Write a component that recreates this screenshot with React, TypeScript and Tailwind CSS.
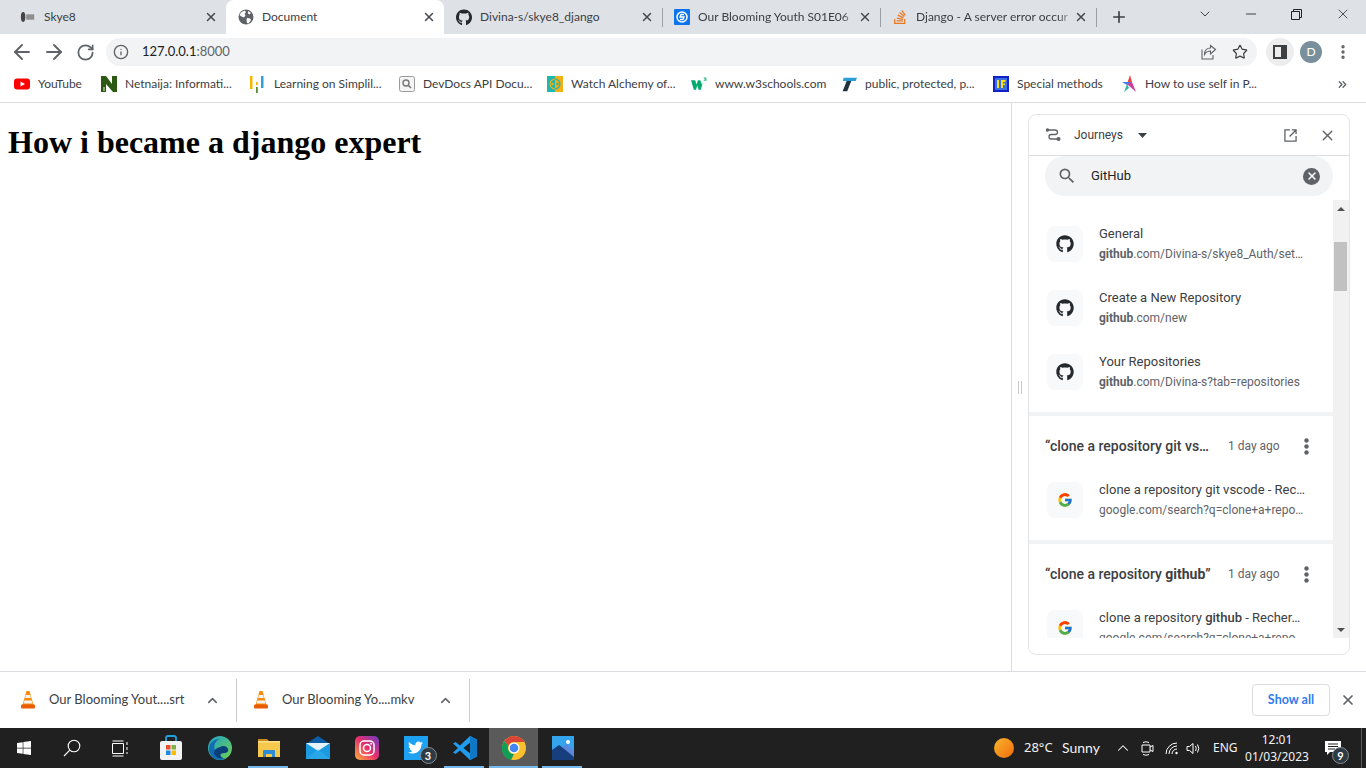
import React from "react";
import { FaGithub, FaStackOverflow, FaWindows, FaTwitter } from "react-icons/fa";
import { FcGoogle } from "react-icons/fc";
import { ArrowLeft, ArrowRight, RotateCw, Info, Star, MoreVertical, Plus, X, ChevronDown, ChevronUp, Minus, ChevronsRight } from "lucide-react";

const ui = "font-['Lato',sans-serif]";

function Favicon({ kind }: { kind: string }) {
  switch (kind) {
    case "yt":
      return <svg width="16" height="16" viewBox="0 0 16 16"><rect y="2.5" width="16" height="11" rx="3" fill="#f00" /><path d="M6.5 5.5v5L11 8z" fill="#fff" /></svg>;
    case "n":
      return <svg width="16" height="18" viewBox="0 0 16 18"><path d="M0 1h5l6 8V1h5v16h-4L5 9v8H0z" fill="#2c5a12" /><path d="M2 12h2v4H2z" fill="#8aa96f" /></svg>;
    case "sl":
      return <svg width="16" height="18" viewBox="0 0 16 18"><rect x="0" y="1" width="2.500" height="13" fill="#f7b500" /><rect x="6" y="7" width="1.800" height="3" fill="#f7b500" /><rect x="6" y="12" width="1.800" height="6" fill="#5a8f3c" /><rect x="11" y="1" width="2.500" height="12" fill="#2f9fe0" /></svg>;
    case "dd":
      return <svg width="16" height="16" viewBox="0 0 16 16"><rect x=".5" y=".5" width="15" height="15" rx="2" fill="#f4f4f4" stroke="#9a9a9a" /><circle cx="7" cy="7" r="3" fill="none" stroke="#777" strokeWidth="1.400" /><path d="M9.200 9.200 12 12" stroke="#777" strokeWidth="1.600" /></svg>;
    case "al":
      return <svg width="16" height="16" viewBox="0 0 16 16"><rect width="8" height="16" fill="#20b6b0" /><rect x="8" width="8" height="16" fill="#f5ae13" /><path d="M8 3C5 3 3 6 3 8s2 5 5 5" fill="none" stroke="#f5ae13" strokeWidth="1.200" /><path d="M8 3c3 0 5 3 5 5s-2 5-5 5" fill="none" stroke="#20b6b0" strokeWidth="1.200" /><circle cx="5.500" cy="8" r="1.200" fill="#f5ae13" /><circle cx="10.500" cy="8" r="1.200" fill="#20b6b0" /></svg>;
    case "w3":
      return <svg width="17" height="14" viewBox="0 0 17 14"><path d="M0 3h4.500l1.200 4.500L7.500 3h2.400l1.600 4.500L13 3h0l-2.500 10H8L6.700 8.500 5.300 13H3z" fill="#04aa6d" /><path d="M13.500 0h3v.8l-1 .9h1V3.500h-3v-1h1.800l-1.800-1.500z" fill="#04aa6d" opacity=".8" /></svg>;
    case "t":
      return <svg width="18" height="17" viewBox="0 0 18 17"><path d="M3 1h15l-1.500 3.500h-5L9 9 5 6.500 7 4.500H2z" fill="#2a9fd6" /><path d="M6.500 4.500h5L7 16H1.800z" fill="#22313f" /></svg>;
    case "if":
      return <svg width="16" height="16" viewBox="0 0 16 16"><rect width="16" height="16" fill="#1220c8" /><rect x="2" y="2" width="12" height="12" fill="#3b6fe0" /><rect x="4" y="4" width="2" height="8" fill="#f7e017" /><path d="M8 4h4.500v2H10v1.500h2V9h-2v3H8z" fill="#f7e017" /></svg>;
    case "st":
      return <svg width="16" height="18" viewBox="0 0 16 18"><path d="M9 0l2 7-5 2z" fill="#e8453c" /><path d="M1 7l10 0-5 3z" fill="#3f7fe8" /><path d="M6 9l5-2 4 10z" fill="#c83fa0" /><path d="M6 9L3 17l5-4z" fill="#34b7a7" /></svg>;
    default:
      return null;
  }
}

function GlobeFill() {
  return (
    <svg width="16" height="16" viewBox="0 0 16 16">
      <circle cx="8" cy="8" r="7.500" fill="#5f6368" />
      <path d="M3 3.500 6.500 1.500 8 3 6.500 5 7.500 6.500 6 8.500 3.500 7.500 1.500 6zM9 9l3 .500 1 1.500-2.500 3.500L9 14l-.500-3zM10 2l3 2-1.500 1.500L10 4.500z" fill="#fff" />
    </svg>
  );
}

const tabs = [
  { w: "w-[218px]", title: "Skye8", icon: <svg width="18" height="12" viewBox="0 0 18 12"><ellipse cx="3.500" cy="6" rx="2.500" ry="5.500" fill="#444" /><rect x="7" y="3" width="9" height="6" fill="#8f8f8f" /></svg>, sep: false, active: false, fade: false },
  { w: "w-[218px]", title: "Document", icon: <GlobeFill />, sep: false, active: true, fade: false },
  { w: "w-[218px]", title: "Divina-s/skye8_django", icon: <FaGithub size={17} color="#24292f" />, sep: true, active: false, fade: false },
  { w: "w-[218px]", title: "Our Blooming Youth S01E06", icon: <svg width="16" height="16" viewBox="0 0 16 16"><rect width="16" height="16" rx="1" fill="#0b74ee" /><circle cx="8" cy="8" r="5" fill="none" stroke="#fff" strokeWidth="1.500" /><path d="M10 5.500H7L6 8h4l-1 2.500H6" fill="none" stroke="#fff" strokeWidth="1.300" /></svg>, sep: true, active: false, fade: true },
  { w: "w-[216px]", title: "Django - A server error occur", icon: <FaStackOverflow size={16} color="#e87922" />, sep: true, active: false, fade: true },
];

const bookmarks = [
  { k: "yt", t: "YouTube", w: "w-[87px]" },
  { k: "n", t: "Netnaija: Informati...", w: "w-[149px]" },
  { k: "sl", t: "Learning on Simplil...", w: "w-[149px]" },
  { k: "dd", t: "DevDocs API Docu...", w: "w-[148px]" },
  { k: "al", t: "Watch Alchemy of...", w: "w-[144px]" },
  { k: "w3", t: "www.w3schools.com", w: "w-[150px]" },
  { k: "t", t: "public, protected, p...", w: "w-[152px]" },
  { k: "if", t: "Special methods", w: "w-[128px]" },
  { k: "st", t: "How to use self in P...", w: "w-[198px]" },
];

function Row({ icon, title, url }: { icon: React.ReactNode; title: React.ReactNode; url: React.ReactNode }) {
  return (
    <div className="flex h-16 shrink-0 items-center pl-[18px]">
      <div className="flex h-9 w-9 shrink-0 items-center justify-center rounded-lg bg-[#f8f9fa]">{icon}</div>
      <div className="ml-4 w-[206px] min-w-0">
        <div className="whitespace-nowrap text-[13px] leading-5 text-[#3c4043]">{title}</div>
        <div className="whitespace-nowrap text-xs leading-5 text-[#5f6368]">{url}</div>
      </div>
    </div>
  );
}

function ClusterHead({ title }: { title: React.ReactNode }) {
  return (
    <div className="flex h-[52px] shrink-0 items-center pt-[8px] pl-4">
      <div className="w-[168px] whitespace-nowrap text-sm font-medium text-[#3c4043]">{title}</div>
      <span className="ml-[15px] w-[52px] whitespace-nowrap text-xs text-[#5f6368]">1 day ago</span>
      <svg width="5" height="17" viewBox="0 0 5 17" className="ml-[23.500px]" fill="#5f6368"><circle cx="2.500" cy="2.500" r="2.200" /><circle cx="2.500" cy="8.500" r="2.200" /><circle cx="2.500" cy="14.500" r="2.200" /></svg>
    </div>
  );
}

function Bag() {
  return (
    <svg width="24" height="26" viewBox="0 0 24 26">
      <path d="M7 6V3q0-2 2-2h6q2 0 2 2v3" fill="none" stroke="#1ba1e2" strokeWidth="1.800" />
      <rect x="1" y="6" width="22" height="19" rx="2" fill="#f3f3f3" />
      <rect x="7" y="10" width="4.500" height="4.500" fill="#e8512f" />
      <rect x="12.500" y="10" width="4.500" height="4.500" fill="#7cb342" />
      <rect x="7" y="15.500" width="4.500" height="4.500" fill="#1e88e5" />
      <rect x="12.500" y="15.500" width="4.500" height="4.500" fill="#fbbc05" />
    </svg>
  );
}

function Edge() {
  return (
    <svg width="24" height="24" viewBox="0 0 24 24">
      <defs>
        <linearGradient id="eg" x1="0" y1="0" x2="1" y2="1"><stop offset="0" stopColor="#1fa0c9" /><stop offset="1" stopColor="#6fd34c" /></linearGradient>
      </defs>
      <circle cx="12" cy="12" r="12" fill="url(#eg)" />
      <path d="M1 13C1 6 7 3 12 3c-6 2-7 8-4 14 2 4 6 6 10 5-2 1-4 2-6 2C6 24 1 19 1 13z" fill="#0f6cb5" />
      <path d="M12 11c3-2 7-1 8 2 1 2-1 4-4 4-4 0-5 3-1 5-5 1-9-2-9-6 0-2 2-4 6-5z" fill="#0b3f7a" />
    </svg>
  );
}

function FolderIcon() {
  return (
    <svg width="22" height="20" viewBox="0 0 22 20">
      <path d="M0 1h9l2 2h-11z" fill="#c98a1b" />
      <rect y="3" width="22" height="16" fill="#f4c84a" />
      <rect y="3" width="22" height="1.500" fill="#fbe08a" />
      <path d="M5 19v-6q0-1 1-1h10q1 0 1 1v6h-3v-3H8v3z" fill="#2d8ad6" />
    </svg>
  );
}

function Mail() {
  return (
    <svg width="24" height="24" viewBox="0 0 24 24">
      <path d="M12 0 24 8H0z" fill="#0a5ea8" />
      <rect y="7" width="24" height="16" fill="#1a9ae0" />
      <path d="M0 7h24L12 15z" fill="#e8f2fa" />
      <path d="M0 23 12 13l12 10z" fill="#38b1ee" opacity=".5" />
    </svg>
  );
}

function Insta() {
  return (
    <svg width="24" height="24" viewBox="0 0 24 24">
      <defs>
        <linearGradient id="ig" x1="0" y1="1" x2="1" y2="0"><stop offset="0" stopColor="#fdb23b" /><stop offset=".5" stopColor="#e8306b" /><stop offset="1" stopColor="#6a3bc4" /></linearGradient>
      </defs>
      <rect width="24" height="24" rx="5" fill="url(#ig)" />
      <rect x="5" y="5" width="14" height="14" rx="4" fill="none" stroke="#fff" strokeWidth="1.500" />
      <circle cx="12" cy="12" r="3.500" fill="none" stroke="#fff" strokeWidth="1.500" />
      <circle cx="16.200" cy="7.800" r="1" fill="#fff" />
    </svg>
  );
}

function VSCode() {
  return (
    <svg width="24" height="24" viewBox="0 0 24 24">
      <path d="M17 0 24 3.500v17L17 24 7 14.500 2.500 18 0 16.500 5 12 0 7.500 2.500 6 7 9.500z" fill="#1f9cf0" />
      <path d="M17 6.500 10.500 12l6.500 5.500z" fill="#202020" />
      <path d="M17 0 24 3.500v17L17 24z" fill="#0f78c4" />
    </svg>
  );
}

function Chrome() {
  return (
    <svg width="24" height="24" viewBox="0 0 24 24">
      <circle cx="12" cy="12" r="12" fill="#fbc02d" />
      <path d="M12 0a12 12 0 0 1 10.400 6H12a6 6 0 0 0-5.700 4L2.300 5A12 12 0 0 1 12 0z" fill="#db4437" />
      <path d="M2.300 5l4 5a6 6 0 0 0 5.700 8L9 24A12 12 0 0 1 2.300 5z" fill="#0f9d58" />
      <circle cx="12" cy="12" r="5.500" fill="#fff" />
      <circle cx="12" cy="12" r="4.300" fill="#4285f4" />
    </svg>
  );
}

function Photos() {
  return (
    <svg width="22" height="24" viewBox="0 0 22 24">
      <rect width="22" height="24" fill="#35a4ee" />
      <circle cx="16" cy="6" r="2" fill="#fff" />
      <path d="M0 24V14l7-5 15 11v4z" fill="#173f7d" />
      <path d="M10 11l5-3 7 7v6z" fill="#5b87dd" />
    </svg>
  );
}

function Badge({ n, className }: { n: string; className: string }) {
  return (
    <span className={`absolute flex h-[17px] w-[17px] items-center justify-center rounded-full border border-[#8a8a8a] bg-[#2c3a46] text-[11px] font-bold leading-none text-white ${className}`}>{n}</span>
  );
}

function Cone() {
  return (
    <svg width="14" height="18" viewBox="0 0 14 18">
      <path d="M5.500 0h3l4 14h-11z" fill="#f58a0b" />
      <path d="M4.900 4h4.200l.8 3H4.100zM3.300 9.500h7.400l.8 3H2.500z" fill="#f4f4f4" />
      <rect y="13.500" width="14" height="4" rx="1" fill="#e85d04" />
    </svg>
  );
}

const taskIcons: { icon: React.ReactNode; under?: boolean; active?: boolean }[] = [
  { icon: <Bag /> },
  { icon: <Edge /> },
  { icon: <FolderIcon />, under: true },
  { icon: <Mail /> },
  { icon: <Insta /> },
  { icon: <span className="relative block h-6 w-6 bg-[#1da1f2]"><FaTwitter size={15} color="#fff" className="absolute left-[4px] top-[4px]" /><Badge n="3" className="left-[16px] top-[11px]" /></span> },
  { icon: <VSCode />, under: true },
  { icon: <Chrome />, under: true, active: true },
  { icon: <Photos />, under: true },
];

const gh = <FaGithub size={18} color="#24292f" />;
const goog = <FcGoogle size={16} />;

export default function App() {
  return (
    <div className={`flex h-[768px] w-[1366px] flex-col overflow-hidden bg-white ${ui}`}>
      {/* tab strip */}
      <div className="flex h-[34px] shrink-0 bg-[#dee1e6]">
        <div className="flex h-[34px] flex-1 items-center pl-2">
          {tabs.map((t) => (
            <div key={t.title} className={`relative flex h-[34px] ${t.w} shrink-0 items-center pl-3 pr-[8px] ${t.active ? "rounded-t-lg bg-white" : ""}`}>
              <span className="flex h-4 w-4 shrink-0 items-center justify-center">{t.icon}</span>
              <span className={`ml-2 min-w-0 flex-1 overflow-hidden whitespace-nowrap text-xs leading-5 text-[#3c4043] ${t.fade ? "[mask-image:linear-gradient(to_right,black_90%,transparent)]" : ""}`}>{t.title}</span>
              <X size={14} strokeWidth={2.500} color="#45494d" className="shrink-0" />
              {t.sep && <span className="absolute right-[-1px] top-[8px] h-[19px] w-px bg-[#9aa0a6]" />}
            </div>
          ))}
          <Plus size={18} strokeWidth={2.200} color="#3c4043" className="ml-[14px]" />
        </div>
        <div className="flex w-[184px] shrink-0 items-center justify-between px-[15px] pb-[6px] text-[#2b2b2b]">
          <ChevronDown size={16} strokeWidth={1.300} />
          <Minus size={16} strokeWidth={1.300} className="ml-[30px]" />
          <svg width="11" height="11" viewBox="0 0 11 11" className="ml-[32px]"><path d="M.5 2.500h8v8h-8zM2.500 2.500v-2h8v8h-2" fill="none" stroke="#222" /></svg>
          <X size={16} strokeWidth={1.200} className="ml-[33px]" />
        </div>
      </div>
      {/* toolbar */}
      <div className="flex h-[38px] shrink-0 items-center bg-white pt-[4px] pb-[6px]">
        <ArrowLeft size={24} strokeWidth={1.900} color="#5f6368" className="ml-[10px]" />
        <ArrowRight size={24} strokeWidth={1.900} color="#5f6368" className="ml-[8px]" />
        <RotateCw size={19} strokeWidth={2.200} color="#5f6368" className="ml-[10px]" />
        <div className="ml-[11px] flex h-[28px] w-[1151px] items-center rounded-full bg-[#f1f3f4] pl-[7px] pr-[9px] text-[13px]">
          <Info size={16} strokeWidth={2} color="#5f6368" />
          <span className="ml-[13px] text-[#202124]">127.0.0.1<span className="text-[#5f6368]">:8000</span></span>
          <span className="flex-1" />
          <svg width="16" height="16" viewBox="0 0 16 16" fill="none" stroke="#5f6368" strokeWidth="1.100"><path d="M1 5.500v9.500h11v-4M14.500 5.500 9.500 1.500v2.500C6 4 3.500 6.500 3.500 10.500 5 8 7 7 9.500 7v3z" /></svg>
          <Star size={16} strokeWidth={1.800} color="#3c4043" className="ml-[15px]" />
        </div>
        <div className="ml-[9px] flex h-[28px] w-[28px] items-center justify-center rounded-full bg-[#ededed]">
          <svg width="14" height="14" viewBox="0 0 14 14"><rect x="1" y="1" width="12" height="12" fill="none" stroke="#3c4043" strokeWidth="2" /><rect x="8" y="1" width="5" height="12" fill="#3c4043" /></svg>
        </div>
        <div className="ml-[6px] flex h-[22px] w-[22px] items-center justify-center rounded-full bg-[#78909c] text-xs text-white">D</div>
        <MoreVertical size={18} strokeWidth={2.500} color="#5f6368" className="ml-3" />
      </div>
      {/* bookmarks */}
      <div className="flex h-[31px] shrink-0 items-center border-b border-[#dadce0] bg-white pb-[6px] pl-[14px]">
        {bookmarks.map((b) => (
          <div key={b.k} className={`flex ${b.w} shrink-0 items-center`}>
            <span className="flex h-4 w-4 shrink-0 items-center justify-center"><Favicon kind={b.k} /></span>
            <span className="ml-2 whitespace-nowrap text-xs text-[#3c4043]">{b.t}</span>
          </div>
        ))}
        <ChevronsRight size={13} strokeWidth={2.500} color="#5f6368" className="ml-[17px]" />
      </div>
      {/* content */}
      <div className="flex min-h-0 flex-1">
        <div className="w-[1012px] shrink-0 border-r border-[#dadce0] bg-white">
          <h1 className="m-0 mx-2 mt-[21.44px] font-['Liberation_Serif',serif] text-[32px] font-bold leading-[37px] text-black">How i became a django expert</h1>
        </div>
        <div className="flex w-[16px] shrink-0 items-center justify-center pt-[1px] pr-[1px]">
          <span className="h-[13px] w-[4px] border-x border-[#c4c7cc]" />
        </div>
        <div className="mb-[16px] mt-[11px] flex h-[541px] w-[322px] shrink-0 flex-col overflow-hidden rounded-lg border border-[#e3e5e8] bg-white font-['Roboto',sans-serif]">
          <div className="flex h-[41px] shrink-0 items-center border-b border-[#dadce0] pl-[17px]">
            <svg width="15" height="14" viewBox="0 0 15 14" fill="none" stroke="#5f6368" strokeWidth="1.300"><circle cx="1.500" cy="2" r="1.100" fill="#5f6368" /><path d="M3 2h6q2.500 0 2.500 2.200T9 6.500H5Q3 6.500 3 8.700T5 11h6" /><circle cx="12.500" cy="11" r="1.400" fill="#5f6368" /></svg>
            <span className="ml-[13px] text-xs text-[#3c4043]">Journeys</span>
            <svg width="9" height="5" viewBox="0 0 9 5" className="ml-[15px]"><path d="M0 0h9L4.500 5z" fill="#3c4043" /></svg>
            <span className="flex-1" />
            <svg width="13" height="13" viewBox="0 0 14 14" fill="none" stroke="#5f6368" strokeWidth="1.400"><path d="M6.500 1H1v12h12V7.500M8.500 1H13v4.500M13 1 6 8" /></svg>
            <X size={17} strokeWidth={1.900} color="#5f6368" className="ml-[22px] mr-[13px]" />
          </div>
          <div className="shrink-0 pl-4 pr-4">
            <div className="flex h-10 w-[288px] items-center rounded-full bg-[#f1f3f4] pl-3 pr-[13px]">
              <svg width="20" height="20" viewBox="0 0 24 24" fill="#5f6368"><path d="M15.500 14h-.79l-.28-.27A6.471 6.471 0 0 0 16 9.500 6.500 6.500 0 1 0 9.500 16c1.610 0 3.090-.59 4.230-1.570l.27.28v.79l5 4.990L20.490 19l-4.990-5zm-6 0C7.010 14 5 11.990 5 9.500S7.010 5 9.500 5 14 7.010 14 9.500 11.990 14 9.500 14z" /></svg>
              <span className="ml-[14px] flex-1 text-[13px] text-[#202124]">GitHub</span>
              <span className="flex h-[17px] w-[17px] items-center justify-center rounded-full bg-[#5f6368]"><X size={12} strokeWidth={3} color="#fff" /></span>
            </div>
          </div>
          <div className="mt-1 flex h-[438px] shrink-0 overflow-hidden">
            <div className="flex w-[304px] shrink-0 flex-col gap-1 bg-[#f1f3f4]">
              <div className="flex shrink-0 flex-col bg-white pt-3 pb-2">
                <Row icon={gh} title="General" url={<><b className="font-bold">github</b>.com/Divina-s/skye8_Auth/set…</>} />
                <Row icon={gh} title="Create a New Repository" url={<><b className="font-bold">github</b>.com/new</>} />
                <Row icon={gh} title="Your Repositories" url={<><b className="font-bold">github</b>.com/Divina-s?tab=repositories</>} />
              </div>
              <div className="flex shrink-0 flex-col bg-white pb-2">
                <ClusterHead title="“clone a repository git vs…" />
                <Row icon={goog} title="clone a repository git vscode - Rec…" url="google.com/search?q=clone+a+repo…" />
              </div>
              <div className="flex shrink-0 flex-col bg-white pb-2">
                <ClusterHead title={<>“clone a repository <b className="font-bold">github</b>”</>} />
                <Row icon={goog} title={<>clone a repository <b className="font-medium">github</b> - Recher…</>} url="google.com/search?q=clone+a+repo" />
              </div>
            </div>
            <div className="flex w-4 shrink-0 flex-col items-center bg-[#f1f1f1] pt-[7px] pb-[6px]">
              <svg width="8" height="4" viewBox="0 0 8 4" className="shrink-0"><path d="M4 0l4 4H0z" fill="#505050" /></svg>
              <span className="ml-[-1px] mt-[31px] h-[49px] w-[13px] shrink-0 bg-[#c1c1c1]" />
              <span className="flex-1" />
              <svg width="8" height="4" viewBox="0 0 8 4" className="shrink-0"><path d="M0 0h8L4 4z" fill="#505050" /></svg>
            </div>
          </div>
        </div>
      </div>
      {/* downloads */}
      <div className="flex h-[57px] shrink-0 items-center border-t border-[#dadce0] bg-white">
        <div className="flex h-[43px] w-[237px] shrink-0 items-center border-r border-[#c9cbce] pl-[21px]">
          <Cone />
          <span className="ml-[14px] w-[137px] whitespace-nowrap text-[13px] text-[#3c4043]">Our Blooming Yout....srt</span>
          <ChevronUp size={15} strokeWidth={2.400} color="#5f6368" className="ml-[19px]" />
        </div>
        <div className="flex h-[43px] w-[233px] shrink-0 items-center border-r border-[#c9cbce] pl-[17px]">
          <Cone />
          <span className="ml-[14px] w-[137px] whitespace-nowrap text-[13px] text-[#3c4043]">Our Blooming Yo....mkv</span>
          <ChevronUp size={15} strokeWidth={2.400} color="#5f6368" className="ml-[19px]" />
        </div>
        <span className="flex-1" />
        <div className="flex h-[32px] w-[78px] items-center justify-center rounded border border-[#dadce0] text-[12.500px] font-bold text-[#2f7cf0]">Show all</div>
        <X size={16} strokeWidth={2.600} color="#5f6368" className="ml-[10px] mr-[10px]" />
      </div>
      {/* taskbar */}
      <div className="flex h-[40px] shrink-0 items-center bg-[#202020] text-white">
        <div className="flex h-10 w-12 items-center justify-center"><FaWindows size={16} color="#fff" /></div>
        <div className="flex h-10 w-12 items-center justify-center">
          <svg width="18" height="18" viewBox="0 0 18 18" fill="none" stroke="#fff" strokeWidth="1.100"><circle cx="11" cy="7" r="5.800" /><path d="M6.800 11.200 1 17" /></svg>
        </div>
        <div className="flex h-10 w-12 items-center justify-center">
          <svg width="17" height="17" viewBox="0 0 17 17" fill="none" stroke="#fff"><path d="M.5 3.500h11v10H.5zM.5 1h11M.5 16h11M15 2v3M15 7v3M15 12v2" /></svg>
        </div>
        <div className="ml-[2px] flex">
          {taskIcons.map((t, i) => (
            <div key={i} className={`relative flex h-10 w-[49px] items-center justify-center ${t.active ? "bg-[#5a5a5a]" : ""}`}>
              {t.icon}
              {t.under && <span className={`absolute bottom-0 h-[2px] bg-[#76b9ed] ${t.active ? "left-0 right-0" : "left-[4px] right-[5px]"}`} />}
            </div>
          ))}
        </div>
        <span className="flex-1" />
        <span className="h-5 w-5 shrink-0 rounded-full bg-gradient-to-br from-[#f5b32c] to-[#f26c0a]" />
        <span className="ml-[10px] w-[38px] font-['Noto_Sans',sans-serif] text-[13px] text-[#f2f2f2]">28°C</span>
        <span className="w-[52px] text-sm text-[#f2f2f2]">Sunny</span>
        <ChevronUp size={18} strokeWidth={1.400} color="#fff" />
        <svg width="13" height="15" viewBox="0 0 13 15" fill="none" stroke="#fff" className="ml-[9px]"><path d="M1 4h8v7H1zM9 6l3-1.500v6L9 9M2 1.500q3-1.500 6 0M2 13.500q3 1.500 6 0" /></svg>
        <svg width="14" height="13" viewBox="0 0 14 13" fill="none" stroke="#fff" className="ml-[11px]"><path d="M1 12A11 11 0 0 1 12 1M4 12a8 8 0 0 1 8-8M7 12a5 5 0 0 1 5-5" /><circle cx="11.500" cy="11" r="1.200" fill="#fff" stroke="none" /></svg>
        <svg width="16" height="13" viewBox="0 0 16 13" fill="none" stroke="#fff" className="ml-[7px]"><path d="M1 4.500h2.500L7 1.500v10l-3.500-3H1zM9.500 4q1.500 2.500 0 5M11.500 2.500q2.500 4 0 8" /></svg>
        <span className="ml-[11px] w-[24px] font-['Noto_Sans',sans-serif] text-xs text-[#f2f2f2]">ENG</span>
        <div className="ml-[10px] flex w-[60px] flex-col items-center font-['Noto_Sans',sans-serif] text-xs leading-[17px] text-[#f2f2f2]">
          <span>12:01</span>
          <span className="whitespace-nowrap">01/03/2023</span>
        </div>
        <div className="relative ml-[18px] h-[16px] w-[16px]">
          <svg width="16" height="16" viewBox="0 0 16 16"><path d="M0 1h16v11H5l-3 3v-3H0z" fill="#fff" /><path d="M3 4h10M3 6.500h10M3 9h7" stroke="#202020" /></svg>
          <Badge n="9" className="left-[7px] top-[7px]" />
        </div>
        <span className="ml-[20px] mr-1 h-10 w-px bg-[#5a5a5a]" />
      </div>
    </div>
  );
}
